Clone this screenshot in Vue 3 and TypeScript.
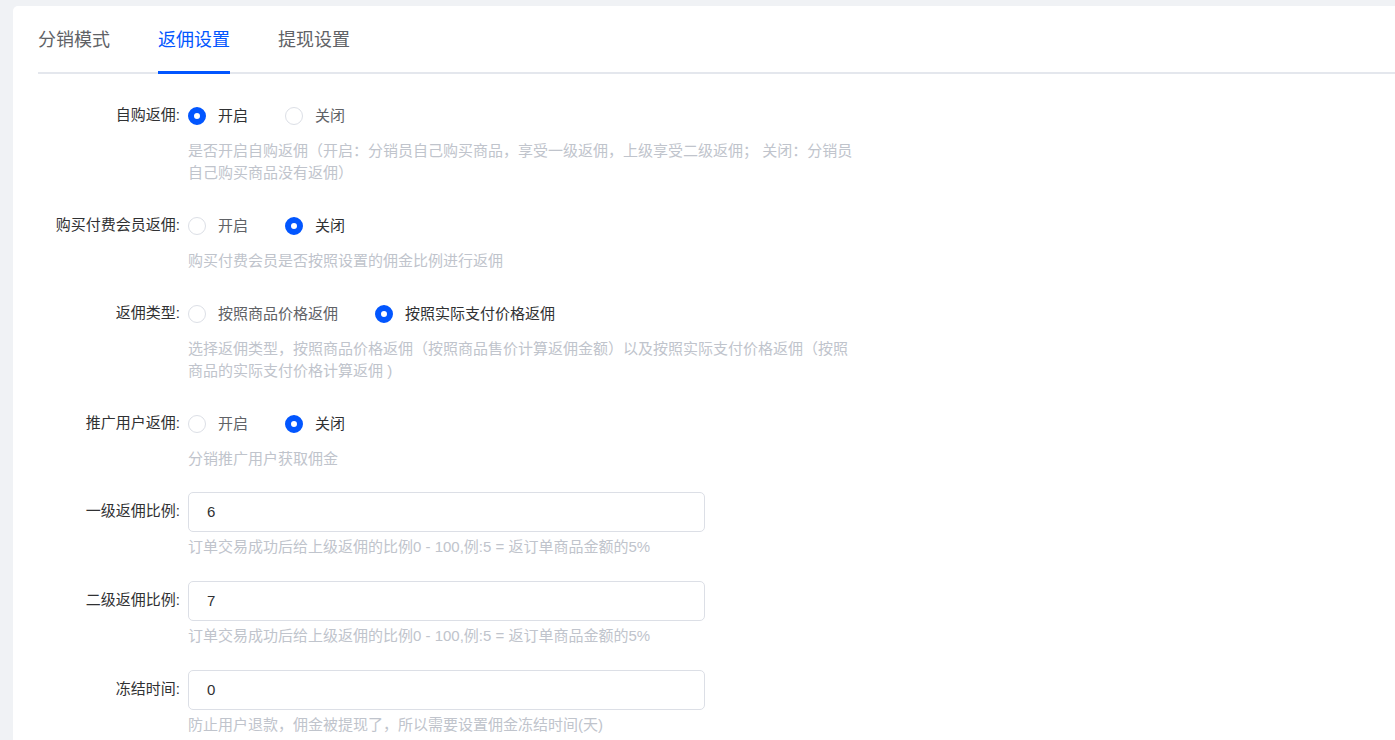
<script setup lang="ts">
import { reactive, ref } from 'vue'

interface Option {
  value: string
  text: string
}

interface RadioField {
  key: string
  label: string
  options: Option[]
  help: string
}

interface NumberField {
  key: string
  label: string
  help: string
}

const tabs: string[] = ['分销模式', '返佣设置', '提现设置']
const activeTab = ref<string>('返佣设置')

const onOff: Option[] = [
  { value: 'on', text: '开启' },
  { value: 'off', text: '关闭' },
]

const radioFields: RadioField[] = [
  {
    key: 'self',
    label: '自购返佣:',
    options: onOff,
    help: '是否开启自购返佣（开启：分销员自己购买商品，享受一级返佣，上级享受二级返佣； 关闭：分销员自己购买商品没有返佣）',
  },
  {
    key: 'member',
    label: '购买付费会员返佣:',
    options: onOff,
    help: '购买付费会员是否按照设置的佣金比例进行返佣',
  },
  {
    key: 'type',
    label: '返佣类型:',
    options: [
      { value: 'goods', text: '按照商品价格返佣' },
      { value: 'paid', text: '按照实际支付价格返佣' },
    ],
    help: '选择返佣类型，按照商品价格返佣（按照商品售价计算返佣金额）以及按照实际支付价格返佣（按照商品的实际支付价格计算返佣 )',
  },
  {
    key: 'promote',
    label: '推广用户返佣:',
    options: onOff,
    help: '分销推广用户获取佣金',
  },
]

const numberFields: NumberField[] = [
  { key: 'first', label: '一级返佣比例:', help: '订单交易成功后给上级返佣的比例0 - 100,例:5 = 返订单商品金额的5%' },
  { key: 'second', label: '二级返佣比例:', help: '订单交易成功后给上级返佣的比例0 - 100,例:5 = 返订单商品金额的5%' },
  { key: 'freeze', label: '冻结时间:', help: '防止用户退款，佣金被提现了，所以需要设置佣金冻结时间(天)' },
]

const form = reactive<Record<string, string>>({
  self: 'on',
  member: 'off',
  type: 'paid',
  promote: 'off',
  first: '6',
  second: '7',
  freeze: '0',
})
</script>

<template>
  <main class="card">
    <nav class="tabs" role="tablist">
      <button
        v-for="tab in tabs"
        :key="tab"
        type="button"
        role="tab"
        class="tab"
        :class="{ active: tab === activeTab }"
        :aria-selected="tab === activeTab"
        @click="activeTab = tab"
      >
        {{ tab }}
      </button>
    </nav>

    <form class="form" @submit.prevent>
      <div
        v-for="field in radioFields"
        :key="field.key"
        class="row"
        role="radiogroup"
        :aria-labelledby="`label-${field.key}`"
      >
        <span :id="`label-${field.key}`" class="label">{{ field.label }}</span>
        <div class="content">
          <div class="options">
            <label v-for="option in field.options" :key="option.value" class="option">
              <input v-model="form[field.key]" type="radio" class="radio" :name="field.key" :value="option.value" />
              <span class="option-text">{{ option.text }}</span>
            </label>
          </div>
          <p class="help">{{ field.help }}</p>
        </div>
      </div>

      <div v-for="field in numberFields" :key="field.key" class="row number-row">
        <label class="label" :for="`input-${field.key}`">{{ field.label }}</label>
        <div class="content">
          <input :id="`input-${field.key}`" v-model="form[field.key]" type="text" inputmode="numeric" class="input" />
          <p class="help">{{ field.help }}</p>
        </div>
      </div>
    </form>
  </main>
</template>

<style>
body {
  background: #f0f2f5;
  overflow-x: hidden;
}
</style>

<style scoped>
.card {
  box-sizing: border-box;
  min-height: calc(100vh - 6px);
  margin: 6px 0 0 13px;
  padding-left: 25px;
  border-top-left-radius: 5px;
  background: #fff;
  color: #303133;
  font-family: 'Liberation Sans', 'Noto Sans CJK SC', sans-serif;
  font-size: 15px;
}

.tabs {
  display: flex;
  gap: 48px;
  height: 68px;
  box-shadow: inset 0 -2px #e4e7ed;
}

.tab {
  padding: 3px 0 0;
  border: 0;
  border-bottom: 3px solid transparent;
  background: none;
  color: #606266;
  font-family: inherit;
  font-size: 18px;
  line-height: 62px;
  cursor: pointer;
}

.tab.active {
  border-bottom-color: #0256ff;
  color: #0256ff;
}

.form {
  padding-top: 22px;
}

.row {
  display: flex;
  gap: 8px;
  margin-bottom: 22px;
}

.number-row {
  margin-bottom: 23px;
}

.number-row:last-child {
  margin-bottom: 0;
}

.label {
  flex: none;
  width: 142px;
  line-height: 38px;
  text-align: right;
  white-space: nowrap;
}

.content {
  flex: 1;
  max-width: 672px;
}

.options {
  display: flex;
  gap: 37px;
  height: 40px;
}

.option {
  display: flex;
  align-items: center;
  gap: 12px;
  cursor: pointer;
}

.option-text {
  color: #606266;
  line-height: 40px;
}

.radio {
  appearance: none;
  box-sizing: border-box;
  width: 18px;
  height: 18px;
  margin: 0;
  border: 1px solid #dcdfe6;
  border-radius: 50%;
  background: #fff;
  cursor: pointer;
}

.radio:checked {
  border: 6px solid #0256ff;
}

.radio:checked + .option-text {
  color: #303133;
}

.help {
  margin: 4px 0 0;
  color: #c0c4cc;
  line-height: 22px;
}

.input {
  display: block;
  box-sizing: border-box;
  width: 77%;
  height: 40px;
  padding: 0 18px 2px;
  border: 1px solid #dcdfe6;
  border-radius: 5px;
  outline: none;
  background: #fff;
  color: #303133;
  font-family: inherit;
  font-size: 15px;
}

.input:focus {
  border-color: #0256ff;
}
</style>
